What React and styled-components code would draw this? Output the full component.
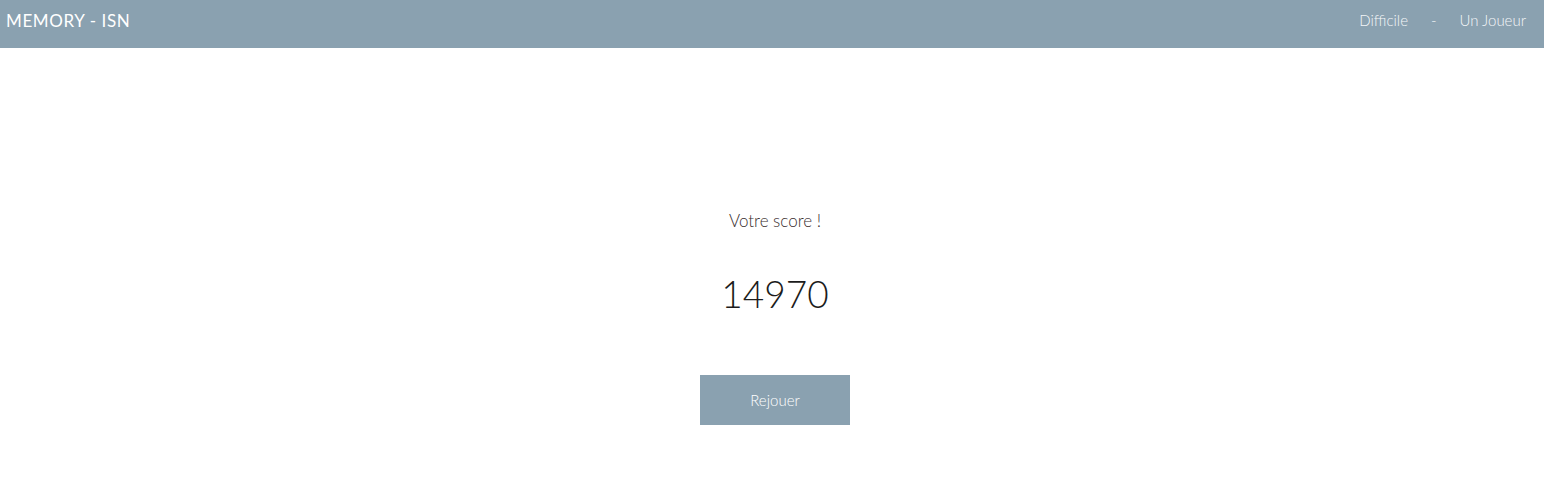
import styled, { createGlobalStyle } from 'styled-components';

const GlobalStyle = createGlobalStyle`
  html, body {
    margin: 0;
    padding: 0;
    background: #fff;
    font-family: 'Lato', 'Open Sans', sans-serif;
  }
`;

const Header = styled.header`
  height: 48px;
  background: #8aa1b0;
  display: flex;
  align-items: center;
  justify-content: space-between;
  padding: 0 18px 0 6px;
  box-sizing: border-box;
`;

const Brand = styled.h1`
  margin: 0;
  padding-bottom: 8px;
  font-size: 17px;
  font-weight: 400;
  color: #fff;
  letter-spacing: 0.6px;
`;

const Nav = styled.nav`
  display: flex;
  align-items: center;
  gap: 23px;
  padding-bottom: 9px;
`;

const NavItem = styled.span`
  font-size: 15px;
  font-weight: 300;
  color: #f4f6f8;
`;

const Main = styled.main`
  display: flex;
  flex-direction: column;
  align-items: center;
  padding: 162px 0 0 6px;
`;

const Label = styled.p`
  margin: 0;
  font-size: 17px;
  font-weight: 300;
  color: #3a2e2e;
`;

const Score = styled.p`
  margin: 40px 0 0;
  font-size: 37px;
  font-weight: 300;
  color: #1c1c1c;
`;

const ReplayButton = styled.button`
  margin-top: 59px;
  width: 150px;
  height: 50px;
  border: none;
  background: #8aa1b0;
  color: #fff;
  font-family: inherit;
  font-size: 15px;
  font-weight: 300;
  cursor: pointer;
`;

const App = () => (
  <>
    <GlobalStyle />
    <Header>
      <Brand>MEMORY - ISN</Brand>
      <Nav>
        <NavItem>Difficile</NavItem>
        <NavItem>-</NavItem>
        <NavItem>Un Joueur</NavItem>
      </Nav>
    </Header>
    <Main>
      <Label>Votre score !</Label>
      <Score>14970</Score>
      <ReplayButton>Rejouer</ReplayButton>
    </Main>
  </>
);

export default App;
